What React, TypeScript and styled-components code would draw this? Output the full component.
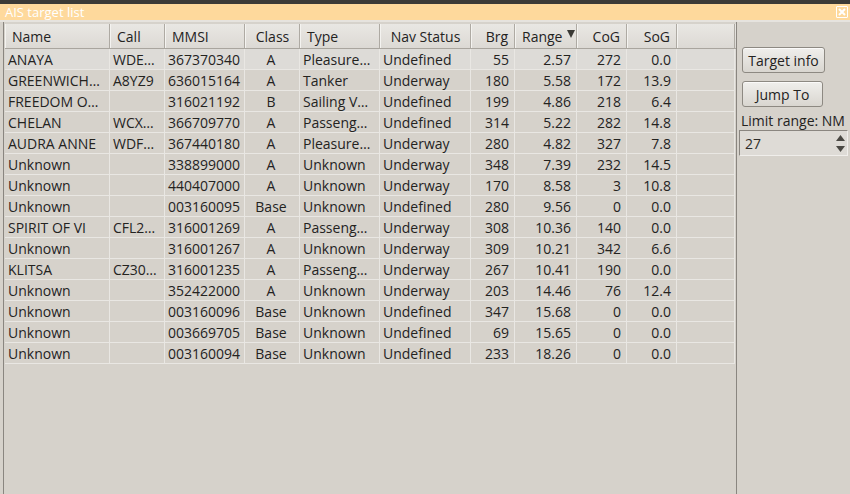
import styled, { createGlobalStyle } from "styled-components";

const GlobalStyle = createGlobalStyle`
  html, body {
    margin: 0;
    padding: 0;
    background: #d6d2cb;
  }
  body {
    font-family: "Open Sans", "Noto Sans", "DejaVu Sans", sans-serif;
    font-size: 14px;
    color: #2d2c29;
  }
`;

type Align = "left" | "center" | "right";

interface Column {
  title: string;
  width: number;
  headAlign: Align;
  cellAlign: Align;
  sorted?: boolean;
}

const columns: Column[] = [
  { title: "Name", width: 105, headAlign: "left", cellAlign: "left" },
  { title: "Call", width: 55, headAlign: "left", cellAlign: "left" },
  { title: "MMSI", width: 80, headAlign: "left", cellAlign: "left" },
  { title: "Class", width: 55, headAlign: "center", cellAlign: "center" },
  { title: "Type", width: 80, headAlign: "left", cellAlign: "left" },
  { title: "Nav Status", width: 91, headAlign: "center", cellAlign: "left" },
  { title: "Brg", width: 44, headAlign: "right", cellAlign: "right" },
  { title: "Range", width: 62, headAlign: "left", cellAlign: "right", sorted: true },
  { title: "CoG", width: 50, headAlign: "right", cellAlign: "right" },
  { title: "SoG", width: 50, headAlign: "right", cellAlign: "right" },
  { title: "", width: 58, headAlign: "left", cellAlign: "left" },
];

const rows: string[][] = [
  ["ANAYA", "WDE…", "367370340", "A", "Pleasure…", "Undefined", "55", "2.57", "272", "0.0", ""],
  ["GREENWICH…", "A8YZ9", "636015164", "A", "Tanker", "Underway", "180", "5.58", "172", "13.9", ""],
  ["FREEDOM O…", "", "316021192", "B", "Sailing V…", "Undefined", "199", "4.86", "218", "6.4", ""],
  ["CHELAN", "WCX…", "366709770", "A", "Passeng…", "Undefined", "314", "5.22", "282", "14.8", ""],
  ["AUDRA ANNE", "WDF…", "367440180", "A", "Pleasure…", "Underway", "280", "4.82", "327", "7.8", ""],
  ["Unknown", "", "338899000", "A", "Unknown", "Underway", "348", "7.39", "232", "14.5", ""],
  ["Unknown", "", "440407000", "A", "Unknown", "Underway", "170", "8.58", "3", "10.8", ""],
  ["Unknown", "", "003160095", "Base", "Unknown", "Undefined", "280", "9.56", "0", "0.0", ""],
  ["SPIRIT OF VI", "CFL2…", "316001269", "A", "Passeng…", "Underway", "308", "10.36", "140", "0.0", ""],
  ["Unknown", "", "316001267", "A", "Unknown", "Underway", "309", "10.21", "342", "6.6", ""],
  ["KLITSA", "CZ30…", "316001235", "A", "Passeng…", "Underway", "267", "10.41", "190", "0.0", ""],
  ["Unknown", "", "352422000", "A", "Unknown", "Underway", "203", "14.46", "76", "12.4", ""],
  ["Unknown", "", "003160096", "Base", "Unknown", "Undefined", "347", "15.68", "0", "0.0", ""],
  ["Unknown", "", "003669705", "Base", "Unknown", "Undefined", "69", "15.65", "0", "0.0", ""],
  ["Unknown", "", "003160094", "Base", "Unknown", "Undefined", "233", "18.26", "0", "0.0", ""],
];

const gridTemplate = columns.map((c) => `${c.width}px`).join(" ");

const App = () => {
  return (
    <Window>
      <GlobalStyle />
      <TopStrip />
      <TitleBar>
        <TitleText>AIS target list</TitleText>
        <CloseButton aria-label="close">
          <svg width="10" height="10" viewBox="0 0 10 10">
            <path d="M2 2 L8 8 M8 2 L2 8" stroke="#ffffff" strokeWidth="2" />
          </svg>
        </CloseButton>
      </TitleBar>
      <Content>
        <TableFrame>
          <HeaderRow>
            {columns.map((col, i) => (
              <HeaderCell key={i} align={col.headAlign}>
                {col.title}
                {col.sorted && (
                  <SortArrow>
                    <svg width="8" height="8" viewBox="0 0 8 8">
                      <path d="M0 0 L8 0 L4 8 Z" fill="#3a3935" />
                    </svg>
                  </SortArrow>
                )}
              </HeaderCell>
            ))}
          </HeaderRow>
          {rows.map((row, r) => (
            <DataRow key={r} selected={r === 0}>
              {row.map((value, c) => (
                <Cell key={c} align={columns[c].cellAlign}>
                  {value}
                </Cell>
              ))}
            </DataRow>
          ))}
        </TableFrame>
        <SidePanel>
          <PanelButton width={83}>Target info</PanelButton>
          <PanelButton width={81}>Jump To</PanelButton>
          <RangeLabel>Limit range: NM</RangeLabel>
          <SpinBox>
            <SpinValue>27</SpinValue>
            <SpinArrows>
              <svg width="9" height="6" viewBox="0 0 9 6">
                <path d="M0 6 L4.5 0 L9 6 Z" fill="#4a4843" />
              </svg>
              <svg width="9" height="6" viewBox="0 0 9 6">
                <path d="M0 0 L4.5 6 L9 0 Z" fill="#4a4843" />
              </svg>
            </SpinArrows>
          </SpinBox>
        </SidePanel>
      </Content>
    </Window>
  );
};

const Window = styled.div`
  width: 850px;
  height: 494px;
  display: flex;
  flex-direction: column;
  overflow: hidden;
`;

const TopStrip = styled.div`
  height: 4px;
  background: #3c3b37;
  flex: none;
`;

const TitleBar = styled.div`
  height: 16px;
  flex: none;
  display: flex;
  align-items: center;
  justify-content: space-between;
  background: #fed99c;
  padding: 0 2px 0 5px;
`;

const TitleText = styled.span`
  color: #ffffff;
  font-size: 13px;
  line-height: 16px;
`;

const CloseButton = styled.div`
  width: 10px;
  height: 10px;
  border: 1px solid #ffffff;
  border-radius: 1px;
  display: flex;
  align-items: center;
  justify-content: center;
`;

const Content = styled.div`
  flex: 1;
  display: flex;
  border-top: 2px solid #e6e3de;
  min-height: 0;
`;

const TableFrame = styled.div`
  margin-left: 3px;
  width: 731px;
  padding-left: 1px;
  padding-top: 2px;
  border-left: 1px solid #8a8680;
  border-right: 1px solid #8a8680;
  display: flex;
  flex-direction: column;
  flex: none;
`;

const HeaderRow = styled.div`
  display: grid;
  grid-template-columns: ${gridTemplate};
  height: 25px;
  background: linear-gradient(#e9e7e3, #dcd9d4);
  border-bottom: 1px solid #a9a59e;
  box-sizing: border-box;
`;

const HeaderCell = styled.div<{ align: Align }>`
  position: relative;
  display: flex;
  align-items: center;
  justify-content: ${({ align }) =>
    align === "left" ? "flex-start" : align === "right" ? "flex-end" : "center"};
  padding: 0 6px 0 7px;
  border-right: 1px solid #aeaaa3;
  box-shadow: inset 1px 0 0 #f4f3f0;
  white-space: nowrap;
  overflow: hidden;
  box-sizing: border-box;
  color: #24231f;
`;

const SortArrow = styled.span`
  position: absolute;
  right: 1px;
  top: 6px;
  display: flex;
`;

const DataRow = styled.div<{ selected: boolean }>`
  display: grid;
  grid-template-columns: ${gridTemplate};
  height: 21px;
  background: ${({ selected }) => (selected ? "#dddbd7" : "transparent")};
`;

const Cell = styled.div<{ align: Align }>`
  display: flex;
  align-items: center;
  justify-content: ${({ align }) =>
    align === "left" ? "flex-start" : align === "right" ? "flex-end" : "center"};
  padding: 0 5px 0 3px;
  border-right: 1px solid #e9e7e3;
  border-bottom: 1px solid #e9e7e3;
  white-space: nowrap;
  overflow: hidden;
  box-sizing: border-box;
  color: #24231f;
`;

const SidePanel = styled.div`
  flex: 1;
  display: flex;
  flex-direction: column;
  align-items: flex-start;
  padding: 25px 2px 0 2px;
`;

const PanelButton = styled.button<{ width: number }>`
  font-family: inherit;
  font-size: 14px;
  color: #24231f;
  width: ${({ width }) => width}px;
  height: 26px;
  padding: 0;
  margin-left: 3px;
  margin-bottom: 8px;
  border: 1px solid #8d8982;
  border-radius: 3px;
  background: linear-gradient(#f0efec, #d9d6d0);
  box-shadow: inset 0 1px 0 #fbfaf9;
`;

const RangeLabel = styled.div`
  margin-top: -4px;
  line-height: 20px;
  margin-left: 2px;
  white-space: nowrap;
  color: #24231f;
`;

const SpinBox = styled.div`
  width: 109px;
  height: 26px;
  margin-top: -1px;
  box-sizing: border-box;
  display: flex;
  align-items: center;
  justify-content: space-between;
  background: #dedbd6;
  border-top: 1px solid #8a8680;
  border-left: 1px solid #8a8680;
  border-bottom: 1px solid #f0eeeb;
  border-right: 1px solid #f0eeeb;
`;

const SpinValue = styled.span`
  padding-left: 5px;
`;

const SpinArrows = styled.div`
  display: flex;
  flex-direction: column;
  gap: 5px;
  padding-right: 2px;
`;

export default App;
